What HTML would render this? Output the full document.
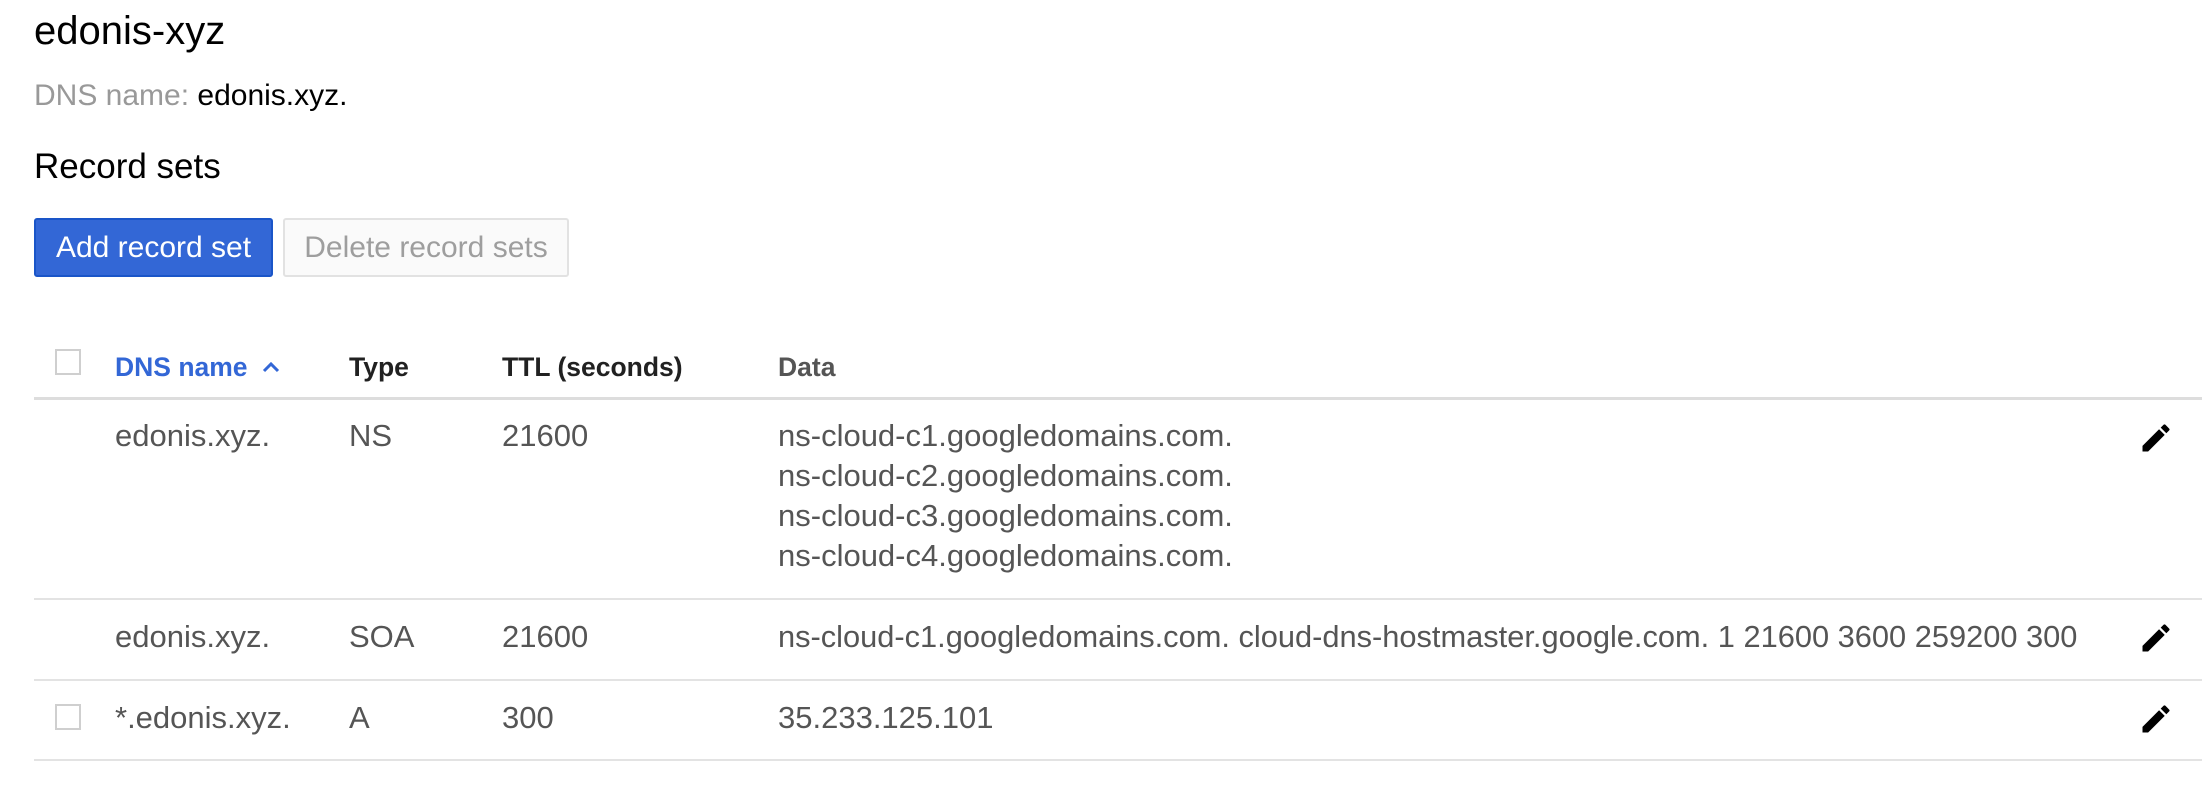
<!DOCTYPE html>
<html><head><meta charset="utf-8"><style>
body{margin:0;width:2208px;height:792px;background:#fff;font-family:"Liberation Sans",sans-serif;position:relative;overflow:hidden}
.a{position:absolute;white-space:nowrap}
.t{font-size:31px;color:#555;line-height:36px}
.h{font-size:26.5px;color:#212121;font-weight:bold;line-height:30px}
.line{position:absolute;left:34px;width:2168px;height:2px;background:#e3e3e3}
.cb{position:absolute;width:26px;height:26px;border:2px solid #cfcfcf;box-sizing:border-box;left:55px}
.pen{position:absolute;left:2138px;width:36px;height:36px}
</style></head><body>
<div class="a" style="left:34px;top:9px;font-size:40px;line-height:44px;color:#000">edonis-xyz</div>
<div class="a" style="left:34px;top:79px;font-size:30px;line-height:34px;color:#999">DNS name: <span style="color:#000">edonis.xyz.</span></div>
<div class="a" style="left:34px;top:147px;font-size:35px;line-height:40px;color:#000">Record sets</div>
<div class="a" style="left:34px;top:218px;width:239px;height:59px;background:#3367d6;border:2px solid #1a55c8;box-sizing:border-box;border-radius:3px;color:#fff;font-size:30px;line-height:55px;text-align:center">Add record set</div>
<div class="a" style="left:283px;top:218px;width:286px;height:59px;background:#fafafa;border:2px solid #e2e2e2;box-sizing:border-box;border-radius:3px;color:#9e9e9e;font-size:30px;line-height:55px;text-align:center">Delete record sets</div>

<div class="cb" style="top:349px"></div>
<div class="a h" style="left:115px;top:352px;color:#3367d6">DNS name <svg width="20" height="14" viewBox="0 0 20 14" style="margin-left:6px;vertical-align:2px"><path d="M3 11 L10 4 L17 11" stroke="#3367d6" stroke-width="3" fill="none"/></svg></div>
<div class="a h" style="left:349px;top:352px">Type</div>
<div class="a h" style="left:502px;top:352px">TTL (seconds)</div>
<div class="a h" style="left:778px;top:352px;color:#555">Data</div>
<div class="line" style="top:397px;height:3px;background:#ddd"></div>

<div class="a t" style="left:115px;top:418px">edonis.xyz.</div>
<div class="a t" style="left:349px;top:418px">NS</div>
<div class="a t" style="left:502px;top:418px">21600</div>
<div class="a t" style="left:778px;top:416px;line-height:40px">ns-cloud-c1.googledomains.com.<br>ns-cloud-c2.googledomains.com.<br>ns-cloud-c3.googledomains.com.<br>ns-cloud-c4.googledomains.com.</div>
<svg class="pen" style="top:420px" viewBox="0 0 24 24"><path d="M3 17.25V21h3.75L17.81 9.94l-3.75-3.75L3 17.25zM20.71 7.04a1 1 0 0 0 0-1.41l-2.34-2.34a1 1 0 0 0-1.41 0l-1.83 1.83 3.75 3.75 1.83-1.83z" fill="#000"/></svg>
<div class="line" style="top:598px"></div>

<div class="a t" style="left:115px;top:619px">edonis.xyz.</div>
<div class="a t" style="left:349px;top:619px">SOA</div>
<div class="a t" style="left:502px;top:619px">21600</div>
<div class="a t" style="left:778px;top:619px;font-size:30.8px">ns-cloud-c1.googledomains.com. cloud-dns-hostmaster.google.com. 1 21600 3600 259200 300</div>
<svg class="pen" style="top:620px" viewBox="0 0 24 24"><path d="M3 17.25V21h3.75L17.81 9.94l-3.75-3.75L3 17.25zM20.71 7.04a1 1 0 0 0 0-1.41l-2.34-2.34a1 1 0 0 0-1.41 0l-1.83 1.83 3.75 3.75 1.83-1.83z" fill="#000"/></svg>
<div class="line" style="top:679px"></div>

<div class="cb" style="top:704px"></div>
<div class="a t" style="left:115px;top:700px">*.edonis.xyz.</div>
<div class="a t" style="left:349px;top:700px">A</div>
<div class="a t" style="left:502px;top:700px">300</div>
<div class="a t" style="left:778px;top:700px">35.233.125.101</div>
<svg class="pen" style="top:701px" viewBox="0 0 24 24"><path d="M3 17.25V21h3.75L17.81 9.94l-3.75-3.75L3 17.25zM20.71 7.04a1 1 0 0 0 0-1.41l-2.34-2.34a1 1 0 0 0-1.41 0l-1.83 1.83 3.75 3.75 1.83-1.83z" fill="#000"/></svg>
<div class="line" style="top:759px"></div>
</body></html>
